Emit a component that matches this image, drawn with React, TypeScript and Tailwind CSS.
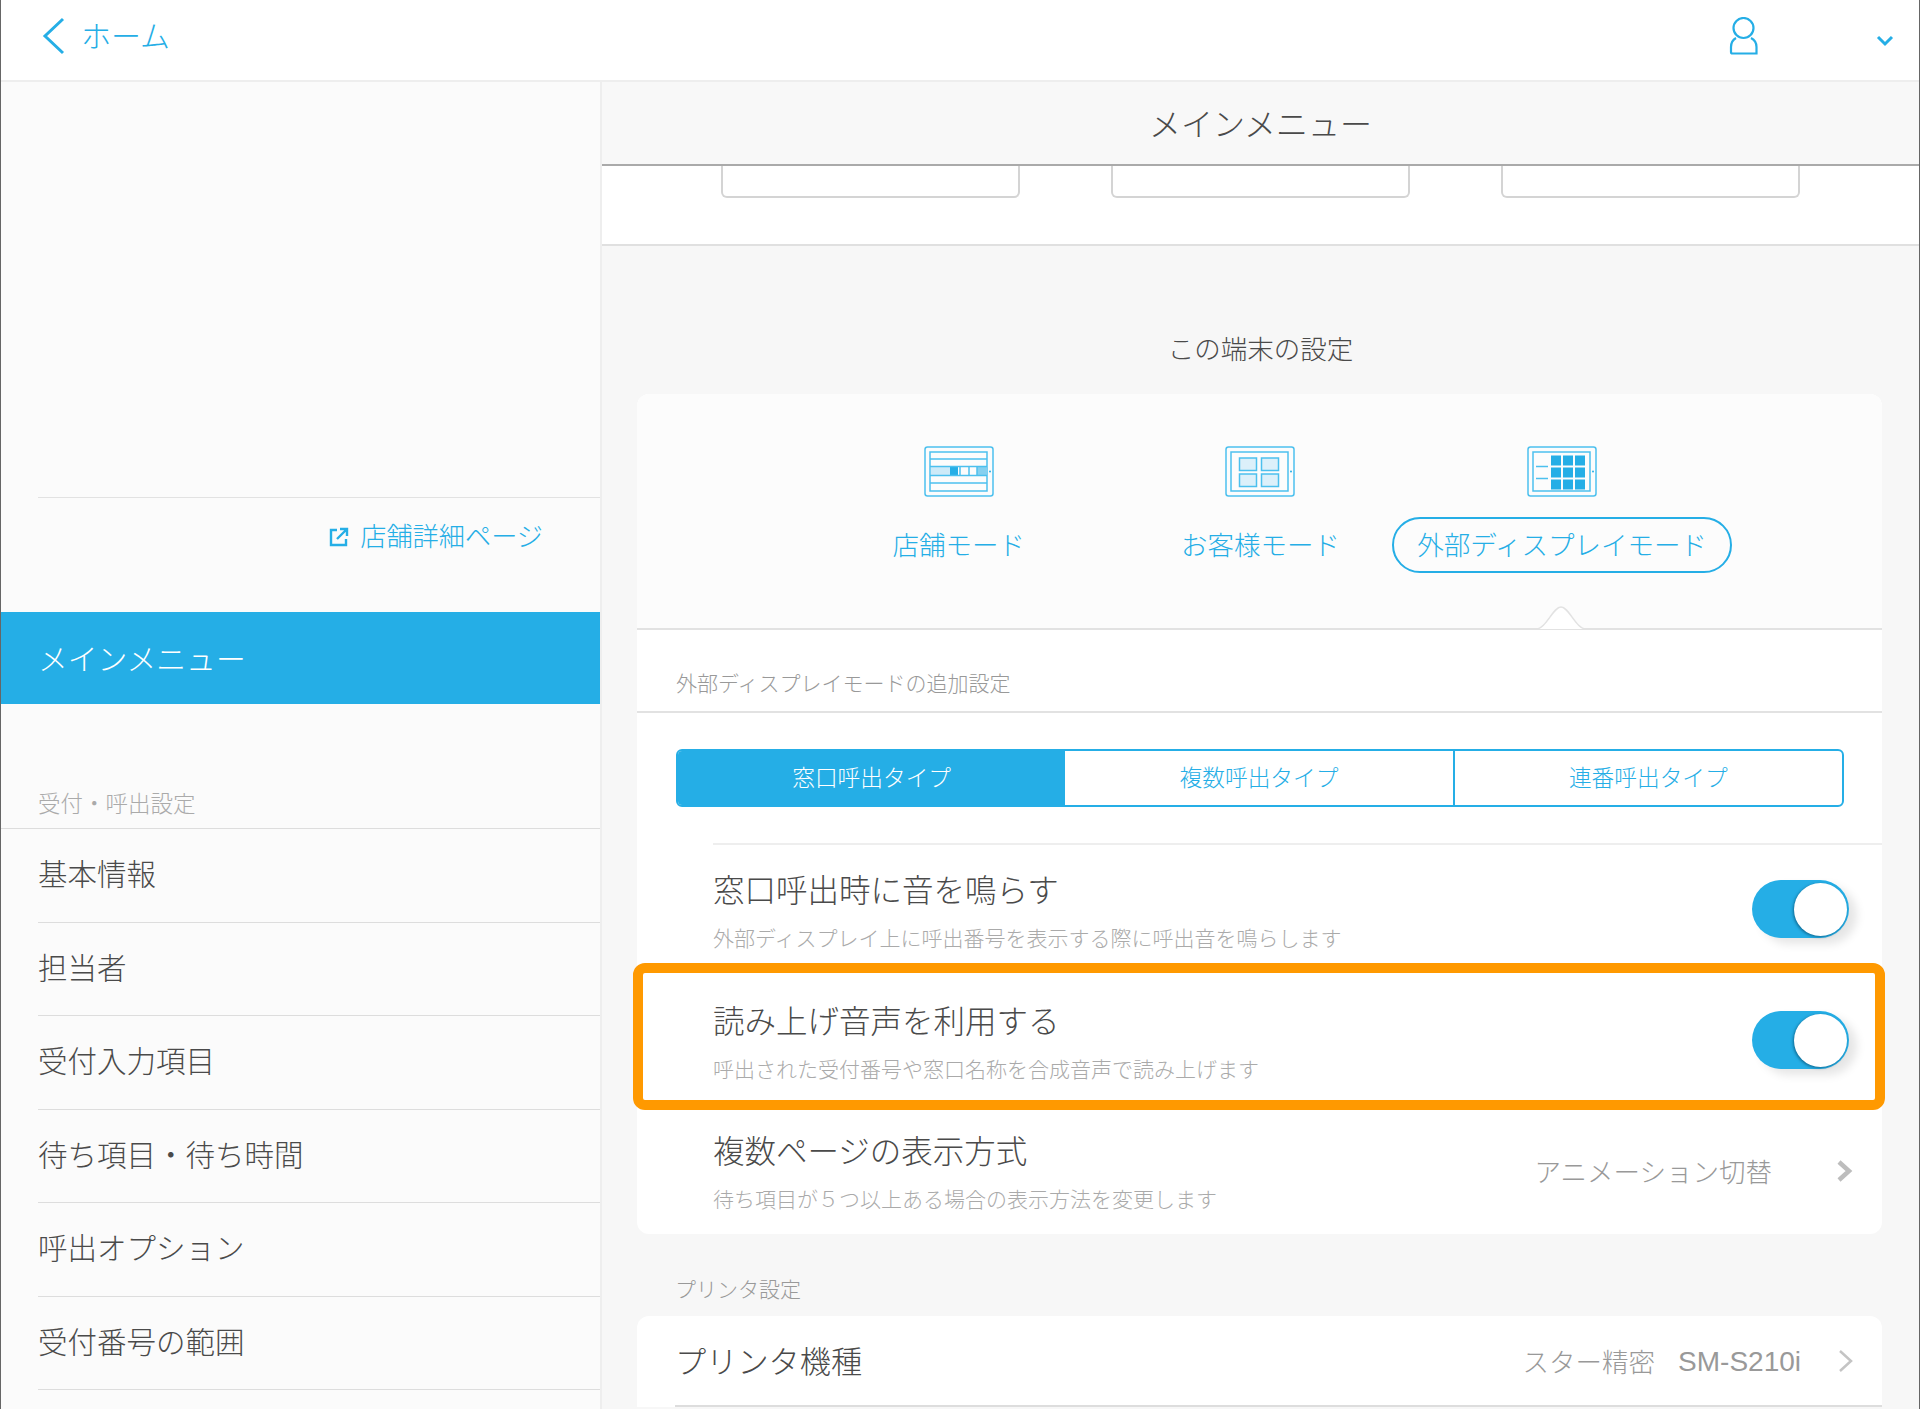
const font = { fontFamily: '"Noto Sans CJK JP", "Noto Sans", sans-serif' };

const sideRows = ["基本情報", "担当者", "受付入力項目", "待ち項目・待ち時間", "呼出オプション", "受付番号の範囲"];

function TabletFrame({ children }: { children: React.ReactNode }) {
  return (
    <svg width="70" height="51" viewBox="0 0 70 51" fill="none" stroke="#4cc0ee" strokeWidth="1.5">
      <rect x="1" y="1" width="68" height="49" rx="2.5" />
      <rect x="6" y="6" width="57" height="39" />
      <circle cx="66" cy="25.5" r="1" fill="#25aee6" stroke="none" />
      {children}
    </svg>
  );
}

function ShopIcon() {
  return (
    <TabletFrame>
      <rect x="7" y="21" width="19" height="8" fill="#cdeaf8" stroke="none" />
      <rect x="26" y="21" width="8" height="8" fill="#25aee6" stroke="none" />
      <rect x="53" y="21" width="10" height="8" fill="#86d0ef" stroke="none" />
      <path d="M6 13H63M6 20.500H63M6 29.500H63M6 37H63M36 21V29M45 21V29M53 21V29" />
    </TabletFrame>
  );
}

function CustomerIcon() {
  return (
    <TabletFrame>
      <rect x="14.500" y="12" width="17" height="12.500" fill="#dcf0fa" />
      <rect x="36.500" y="12" width="17" height="12.500" fill="#dcf0fa" />
      <rect x="14.500" y="28" width="17" height="12.500" fill="#dcf0fa" />
      <rect x="36.500" y="28" width="17" height="12.500" fill="#dcf0fa" />
    </TabletFrame>
  );
}

function DisplayIcon() {
  const xs = [24, 36, 48];
  const ys = [9.5, 21.5, 33.5];
  return (
    <TabletFrame>
      <path d="M9 20.500H21M9 32.500H21" />
      {ys.map((y) =>
        xs.map((x) => <rect key={`${x}-${y}`} x={x} y={y} width="10" height="10" fill="#25aee6" stroke="none" />)
      )}
    </TabletFrame>
  );
}

function Toggle() {
  return (
    <div className="flex h-[58px] w-[97px] shrink-0 items-center justify-end rounded-full bg-[#25aee6] pr-[2px] shadow-[8px_6px_10px_rgba(0,0,0,0.10)]">
      <div className="h-[53px] w-[53px] rounded-full bg-white shadow-[-1px_1px_3px_rgba(0,60,90,0.6)]" />
    </div>
  );
}

function BoldChevron() {
  return (
    <svg width="17" height="24" viewBox="0 0 17 24" fill="none" stroke="#bdbdbd" strokeWidth="4.500">
      <path d="M3 3L13 12L3 21" />
    </svg>
  );
}

function SettingRow({ title, sub, right, h }: { title: string; sub: string; right: React.ReactNode; h: string }) {
  return (
    <div className={`flex items-center justify-between pl-[76px] pr-[33px] ${h}`}>
      <div>
        <div className="text-[31.500px] leading-[40px] font-light text-[#4a4a4a]">{title}</div>
        <div className="mt-[15.500px] text-[21px] leading-[28px] font-light text-[#aaaaaa]">{sub}</div>
      </div>
      {right}
    </div>
  );
}

export default function App() {
  return (
    <div className="h-[1409px] w-[1920px] overflow-hidden border-x border-x-[#666666] bg-[#f7f7f7]" style={font}>
      <header className="flex h-[82px] items-center justify-between border-b-2 border-[#eeeeee] bg-white pr-[25px] pb-[8px] pl-[41px]">
        <div className="flex items-center text-[#25aee6]">
          <svg width="24" height="38" viewBox="0 0 24 38" fill="none" stroke="#25aee6" strokeWidth="3">
            <path d="M21 2L3 19L21 36" />
          </svg>
          <span className="ml-[15px] pb-[5px] text-[30px] leading-[40px] font-light">ホーム</span>
        </div>
        <div className="flex items-center gap-[117px]">
          <svg width="30" height="38" viewBox="0 0 30 38" fill="none" stroke="#25aee6" strokeWidth="2.200">
            <circle cx="14.500" cy="11" r="10" />
            <path d="M7 21C3.500 23 2 26 2 30V35Q2 36.500 3.500 36.500H27.500V30C27.500 26 26 23 22 21" />
          </svg>
          <svg className="mt-[9px]" width="18" height="12" viewBox="0 0 18 12" fill="none" stroke="#25aee6" strokeWidth="3">
            <path d="M2 2L9 9L16 2" />
          </svg>
        </div>
      </header>

      <div className="flex">
        <aside className="h-[1327px] w-[601px] shrink-0 border-r-2 border-[#eeeeee] bg-[#fbfbfb]">
          <div className="h-[415px]" />
          <div className="ml-[37px] flex h-[115px] items-start justify-end border-t border-[#e2e2e2] pt-[19px] pr-[57px] text-[#25aee6]">
            <svg className="mt-[10px] mr-[11px]" width="20" height="20" viewBox="0 0 20 20" fill="none" stroke="#25aee6" strokeWidth="2.400">
              <path d="M8 3H2V18H17V12M11 2H18V9M18 2L8 12" />
            </svg>
            <span className="text-[26.200px] leading-[36px] font-light">店舗詳細ページ</span>
          </div>
          <div className="flex h-[92px] items-center bg-[#25aee6] pb-[2px] pl-[37px] text-[29.800px] font-light text-white">メインメニュー</div>
          <div className="h-[124px] pt-[83px] pl-[37px] text-[22.500px] leading-[30px] font-light text-[#aaaaaa]">受付・呼出設定</div>
          <div className="border-t border-[#dddddd]">
            {sideRows.map((r) => (
              <div key={r} className="ml-[37px] flex h-[93.500px] items-center border-b border-[#dddddd] pb-[6px] text-[29.500px] font-light text-[#4a4a4a]">
                {r}
              </div>
            ))}
          </div>
        </aside>

        <main className="min-w-0 flex-1">
          <div className="flex h-[84px] items-center justify-center border-b-2 border-[#aaaaaa] bg-[#f8f8f8] pb-[2px] text-[32px] font-light text-[#4a4a4a]">メインメニュー</div>
          <div className="flex h-[80px] justify-center gap-[91px] border-b-2 border-[#e0e0e0] bg-white">
            {[0, 1, 2].map((i) => (
              <div key={i} className="h-[32px] w-[299px] rounded-b-[6px] border-x-2 border-b-2 border-[#d4d4d4]" />
            ))}
          </div>

          <div className="pt-[87px] pb-[31px] text-center text-[26.500px] leading-[30px] font-light text-[#4a4a4a]">この端末の設定</div>

          <div className="relative mr-[37px] ml-[35px] rounded-[12px] bg-white">
            <div className="relative h-[236px] rounded-t-[12px] border-b-2 border-[#e2e2e2] bg-[#fcfcfc] pt-[52px] pl-[2px]">
              <div className="mx-auto grid w-[905px] grid-cols-3 text-[#25aee6]">
                <div className="flex flex-col items-center">
                  <ShopIcon />
                  <div className="mt-[20px] flex h-[56px] items-center pb-[2px] text-[26.500px] font-light">店舗モード</div>
                </div>
                <div className="flex flex-col items-center">
                  <CustomerIcon />
                  <div className="mt-[20px] flex h-[56px] items-center pb-[2px] text-[26.500px] font-light">お客様モード</div>
                </div>
                <div className="flex flex-col items-center">
                  <DisplayIcon />
                  <div className="mt-[20px] flex h-[56px] w-[340px] items-center justify-center rounded-full border-2 border-[#25aee6] pb-[2px] text-[26.500px] font-light">外部ディスプレイモード</div>
                </div>
              </div>
              <svg className="absolute bottom-[-2px] left-[899px]" width="50" height="26" viewBox="0 0 50 26" fill="none">
                <path d="M0 25C10 25 17 3 25 3C33 3 40 25 50 25Z" fill="white" />
                <path d="M0 25C10 25 17 3 25 3C33 3 40 25 50 25" stroke="#e2e2e2" strokeWidth="1.500" />
              </svg>
            </div>

            <div className="flex h-[83px] items-center border-b-2 border-[#e2e2e2] pt-[25px] pl-[39px] text-[21px] font-light text-[#999999]">外部ディスプレイモードの追加設定</div>

            <div className="mt-[36px] mr-[38px] ml-[39px] flex h-[58px] overflow-hidden rounded-[6px] border-2 border-[#25aee6] text-[22.700px] font-light text-[#25aee6]">
              <div className="flex flex-1 items-center justify-center bg-[#25aee6] pb-[2px] text-white">窓口呼出タイプ</div>
              <div className="flex flex-1 items-center justify-center border-r-2 border-[#25aee6] pb-[2px]">複数呼出タイプ</div>
              <div className="flex flex-1 items-center justify-center pb-[2px]">連番呼出タイプ</div>
            </div>

            <div className="mt-[36px] ml-[76px] border-t-2 border-[#eeeeee]" />
            <SettingRow h="h-[131px] pb-[2.500px]" title="窓口呼出時に音を鳴らす" sub="外部ディスプレイ上に呼出番号を表示する際に呼出音を鳴らします" right={<Toggle />} />
            <SettingRow h="h-[131px] pb-[2.500px]" title="読み上げ音声を利用する" sub="呼出された受付番号や窓口名称を合成音声で読み上げます" right={<Toggle />} />
            <SettingRow
              h="h-[127px]"
              title="複数ページの表示方式"
              sub="待ち項目が５つ以上ある場合の表示方法を変更します"
              right={
                <div className="-mr-[4px] flex items-center gap-[64px]">
                  <span className="text-[26.500px] font-light text-[#999999]">アニメーション切替</span>
                  <BoldChevron />
                </div>
              }
            />

            <div className="pointer-events-none absolute top-[569px] right-[-3px] left-[-4px] h-[147px] rounded-[12px] border-[10px] border-[#ff9900]" />
          </div>

          <div className="pt-[40px] pr-[73px] pb-[14px] pl-[73px] text-[21px] leading-[28px] font-light text-[#999999]">プリンタ設定</div>

          <div className="mr-[37px] ml-[35px] rounded-t-[12px] bg-white">
            <div className="ml-[38px] flex h-[91px] items-center justify-between border-b-2 border-[#dddddd] pr-[28px]">
              <span className="text-[31.200px] font-light text-[#4a4a4a]">プリンタ機種</span>
              <div className="flex items-center gap-[36px]">
                <div className="flex items-center gap-[23px] text-[#999999]">
                  <span className="text-[26.500px] font-light">スター精密</span>
                  <span className="mt-[3px] text-[28px]" style={{ fontFamily: '"Liberation Sans", sans-serif' }}>SM-S210i</span>
                </div>
                <svg width="17" height="24" viewBox="0 0 17 24" fill="none" stroke="#c4c4c4" strokeWidth="2.500">
                  <path d="M3 2L14 12L3 22" />
                </svg>
              </div>
            </div>
          </div>
        </main>
      </div>
    </div>
  );
}
